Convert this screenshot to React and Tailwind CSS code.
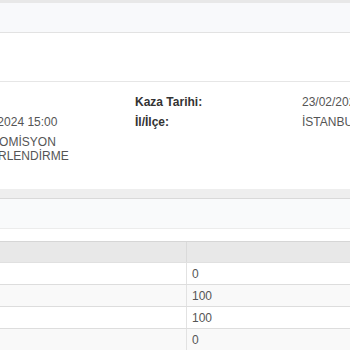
export default function App() {
  const rows = [
    { v: "0", bg: "bg-white" },
    { v: "100", bg: "bg-[#f9f9f9]" },
    { v: "100", bg: "bg-white" },
    { v: "0", bg: "bg-[#f9f9f9]" },
  ];
  return (
    <div className="w-[350px] h-[350px] overflow-hidden bg-white text-[12px] text-[#555]" style={{ fontFamily: '"Liberation Sans", Arial, sans-serif' }}>
      <div className="h-[3px] bg-[#e8e8e8]" />
      <div className="h-[30px] bg-[#f8f9fb] border-b border-[#e2e2e2]" />
      <div className="h-[49px] bg-white border-b border-[#e6e6e6]" />
      <div className="pt-[10px] h-[107px]">
        <div className="grid grid-cols-[171px_167px_1fr] -ml-[36px] leading-[14px] whitespace-nowrap">
          <div className="py-[3px]">&nbsp;</div>
          <div className="py-[3px] font-bold text-[#333]">Kaza Tarihi:</div>
          <div className="py-[3px]">23/02/2024</div>
          <div className="py-[3px]">23/02/2024 15:00</div>
          <div className="py-[3px] font-bold text-[#333]">İl/İlçe:</div>
          <div className="py-[3px]">İSTANBUL</div>
          <div className="py-[3px]">ÜST KOMİSYON<br />DEĞERLENDİRME</div>
          <div className="py-[3px]" />
          <div className="py-[3px]" />
        </div>
      </div>
      <div className="h-[10px] bg-[#eeeeee] border-b border-[#d9d9d9]" />
      <div className="h-[30px] bg-[#f9fafb] border-b border-[#ececec]" />
      <div className="h-[12px] bg-white" />
      <div className="border-t border-[#d6d6d6]">
        <div className="grid grid-cols-[187px_1fr] h-[21px] bg-[#e8e8e8] border-b border-[#e0e0e0]">
          <div className="border-r border-[#dadada]" />
          <div />
        </div>
        {rows.map((r, i) => (
          <div key={i} className={`grid grid-cols-[187px_1fr] h-[22px] border-b border-[#dddddd] ${r.bg}`}>
            <div className="border-r border-[#e2e2e2]" />
            <div className="pl-[5px] flex items-center">{r.v}</div>
          </div>
        ))}
      </div>
    </div>
  );
}
